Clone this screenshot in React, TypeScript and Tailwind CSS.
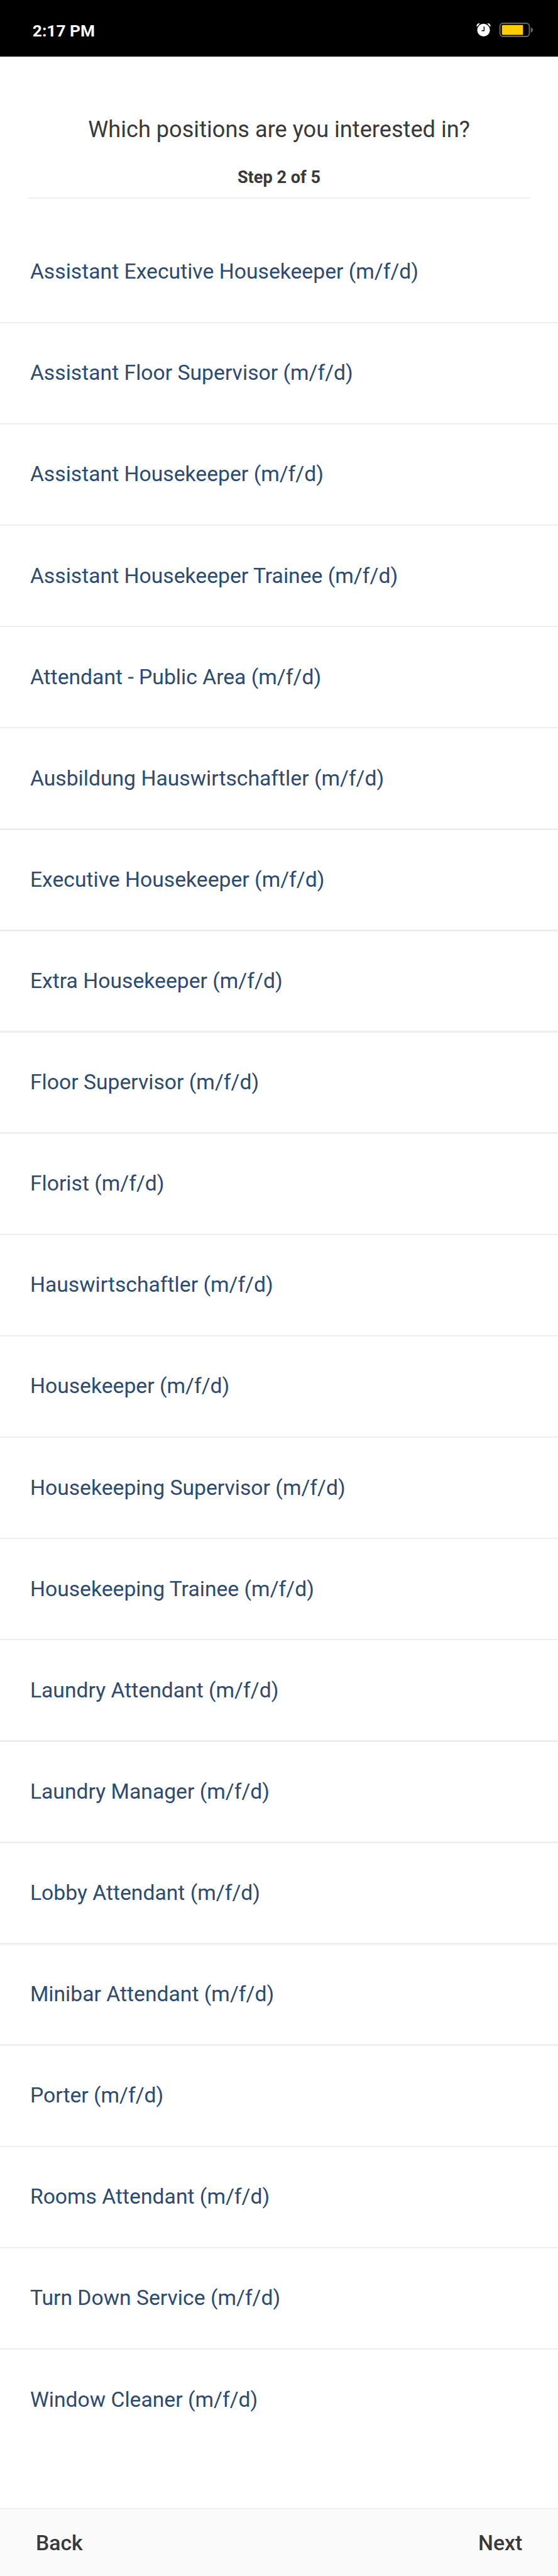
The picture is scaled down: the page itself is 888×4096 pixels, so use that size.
const positions = [
  'Assistant Executive Housekeeper (m/f/d)',
  'Assistant Floor Supervisor (m/f/d)',
  'Assistant Housekeeper (m/f/d)',
  'Assistant Housekeeper Trainee (m/f/d)',
  'Attendant - Public Area (m/f/d)',
  'Ausbildung Hauswirtschaftler (m/f/d)',
  'Executive Housekeeper (m/f/d)',
  'Extra Housekeeper (m/f/d)',
  'Floor Supervisor (m/f/d)',
  'Florist (m/f/d)',
  'Hauswirtschaftler (m/f/d)',
  'Housekeeper (m/f/d)',
  'Housekeeping Supervisor (m/f/d)',
  'Housekeeping Trainee (m/f/d)',
  'Laundry Attendant (m/f/d)',
  'Laundry Manager (m/f/d)',
  'Lobby Attendant (m/f/d)',
  'Minibar Attendant (m/f/d)',
  'Porter (m/f/d)',
  'Rooms Attendant (m/f/d)',
  'Turn Down Service (m/f/d)',
  'Window Cleaner (m/f/d)',
];

function StatusIcons() {
  return (
    <svg className="h-[28px] w-[92px]" viewBox="0 0 112 34" fill="none">
      <circle cx="16.5" cy="18" r="12.3" fill="#fff" />
      <path d="M3.2 11.3C2.3 7 5.2 4.4 9.6 5.2L4.2 11.2Z" fill="#fff" />
      <path d="M29.8 11.3C30.7 7 27.8 4.4 23.4 5.2L28.8 11.2Z" fill="#fff" />
      <path d="M17.5 11.3V19.2H12.7" stroke="#000" strokeWidth="1.8" />
      <rect x="48.2" y="4.7" width="57" height="25.6" rx="6" stroke="#666" strokeWidth="2.4" />
      <path d="M54 8.2H93V27.2H54Q52 27.2 52 25.2V10.2Q52 8.2 54 8.2Z" fill="#fc0" />
      <path d="M108 13C113.6 14 113.6 21.5 108 22.5Z" fill="#666" />
    </svg>
  );
}

export default function App() {
  return (
    <div className="flex h-[4096px] w-[888px] flex-col overflow-hidden bg-white font-['Roboto',sans-serif] text-[#393939]">
      <header className="flex h-[90.4px] shrink-0 items-center justify-between bg-black pt-[3px] pr-[39.9px] pl-[51.8px]">
        <span className="pt-[5px] text-[26.3px] leading-none font-bold text-white">2:17 PM</span>
        <StatusIcons />
      </header>

      <div className="mx-[45px] flex h-[226px] shrink-0 flex-col items-center pt-[94px]">
        <h1 className="text-[36.17px] leading-[44px] whitespace-nowrap">Which positions are you interested in?</h1>
        <p className="mt-[37px] text-[27.15px] leading-[34px] font-bold whitespace-nowrap">Step 2 of 5</p>
        <div className="mt-auto h-[2.47px] w-full shrink-0 bg-[#eee]" />
      </div>

      <ul className="mt-[36.5px] flex flex-col">
        {positions.map((position) => (
          <li key={position} className="group flex h-[161.12px] shrink-0 flex-col">
            <div className="flex flex-1 items-center pl-[47.9px] text-[33.7px] leading-[40px] whitespace-nowrap text-[#2b4b72]">
              {position}
            </div>
            <div className="h-[2.47px] shrink-0 bg-[#eee] group-last:bg-transparent" />
          </li>
        ))}
      </ul>

      <footer className="mt-auto flex h-[108.5px] shrink-0 flex-col bg-[#fafafa]">
        <div className="h-[2.47px] shrink-0 bg-[#eee]" />
        <nav className="flex flex-1 items-center justify-between pt-[2px] pr-[56.8px] pl-[57px] text-[33.7px] leading-[40px] font-medium">
          <button>Back</button>
          <button>Next</button>
        </nav>
      </footer>
    </div>
  );
}
